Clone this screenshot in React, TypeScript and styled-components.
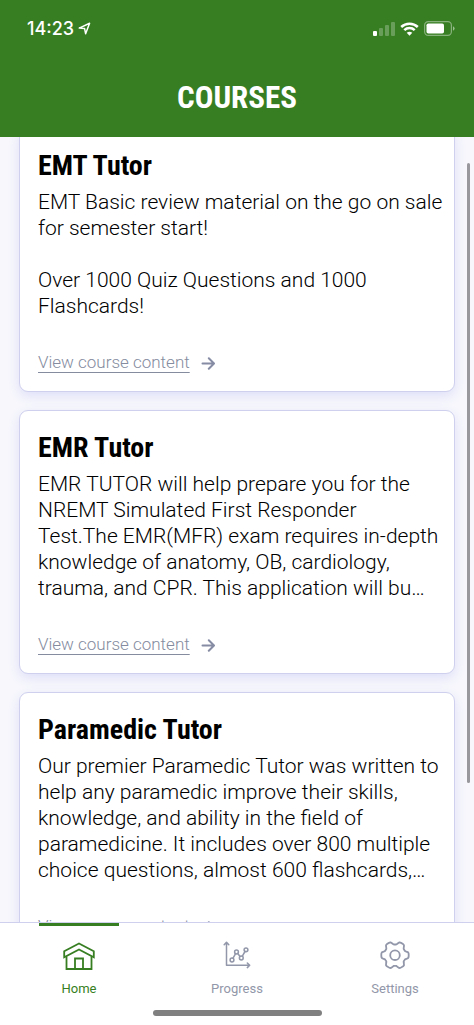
import React, { useLayoutEffect, useRef } from "react";
import styled, { createGlobalStyle } from "styled-components";

const GlobalStyle = createGlobalStyle`
  * { box-sizing: border-box; }
  body { margin: 0; background: #fff; font-family: Roboto, "Liberation Sans", sans-serif; font-weight: 300; }
`;

const Screen = styled.div`
  display: flex;
  flex-direction: column;
  height: 100vh;
  overflow: hidden;
`;

const Header = styled.header`
  flex: none;
  background: #377e22;
  color: #fff;
  padding-bottom: 20px;
`;

const StatusBar = styled.div`
  display: flex;
  align-items: center;
  justify-content: space-between;
  height: 57px;
  padding: 0 19px 0 27px;
`;

const Clock = styled.div`
  display: flex;
  align-items: center;
  gap: 4px;
  font: 500 18px/24px Inter, sans-serif;
`;

const StatusIcons = styled.div`
  display: flex;
  align-items: center;
  gap: 5px;
`;

const PageTitle = styled.h1`
  margin: 22px 0 0;
  text-align: center;
  font: 700 31px/38px "Roboto Condensed", "Liberation Sans Narrow", sans-serif;
`;

const Body = styled.div`
  position: relative;
  flex: 1;
  min-height: 0;
`;

const CourseList = styled.main`
  display: flex;
  flex-direction: column;
  gap: 18px;
  height: 100%;
  padding: 19px;
  overflow-y: auto;
  scrollbar-width: none;
  background: #f7f7fc;
`;

const ScrollThumb = styled.div`
  position: absolute;
  top: 26px;
  right: 4px;
  width: 3px;
  height: 79%;
  border-radius: 2px;
  background: #98989d;
`;

const Card = styled.article`
  flex: none;
  padding: 21px 0 17px 18px;
  border: 1px solid #cfd0ee;
  border-radius: 9px;
  background: #fff;
  box-shadow: 0 4px 12px #dedff8;
`;

const CardTitle = styled.h2`
  margin: 0 0 7px;
  color: #000;
  font: 700 28px/32px "Roboto Condensed", "Liberation Sans Narrow", sans-serif;
`;

const Description = styled.p`
  margin: 0 0 31px;
  color: #000;
  font-size: 21px;
  line-height: 26px;
  white-space: pre-line;
`;

const CourseLink = styled.a`
  display: flex;
  align-items: center;
  gap: 11px;
  color: #858ca0;
  font-size: 17px;
  line-height: 24px;
  text-decoration: none;

  span {
    text-decoration: underline;
    text-decoration-thickness: 1px;
    text-underline-offset: 4px;
    text-decoration-skip-ink: none;
  }
`;

const TabBar = styled.nav`
  flex: none;
  display: grid;
  grid-template-columns: repeat(3, 1fr);
  border-top: 1px solid #cfd0ee;
  background: #fff;
`;

const Tab = styled.button<{ $active?: boolean }>`
  display: flex;
  flex-direction: column;
  align-items: center;
  gap: 7px;
  padding: 0;
  border: 0;
  background: none;
  color: ${(p) => (p.$active ? "#377e22" : "#9297a9")};
  font: 400 13px/20px Roboto, "Liberation Sans", sans-serif;

  &::before {
    content: "";
    width: 80px;
    height: 3px;
    margin-bottom: 7px;
    background: ${(p) => (p.$active ? "#377e22" : "transparent")};
  }
`;

const HomeIndicator = styled.div`
  flex: none;
  width: 169px;
  height: 6px;
  margin: 11px auto 9px;
  border-radius: 3px;
  background: #808080;
`;

const LocationIcon = () => (
  <svg width="13" height="13" viewBox="0 0 13 13" fill="none" stroke="#fff" strokeWidth="1.5" strokeLinejoin="round" aria-hidden="true">
    <path d="M1.2 6.1 11.6 1.3 7.6 11.7 6.6 6.6Z" />
  </svg>
);

const SignalIcon = () => (
  <svg width="22" height="14" viewBox="0 0 22 14" fill="#fff" aria-hidden="true">
    <rect x="0" y="9" width="4" height="5" rx="1" />
    <g opacity=".25">
      <rect x="6" y="6" width="4" height="8" rx="1" />
      <rect x="12" y="3" width="4" height="11" rx="1" />
      <rect x="18" y="0" width="4" height="14" rx="1" />
    </g>
  </svg>
);

const WifiIcon = () => (
  <svg width="19" height="14" viewBox="0 0 19 14" fill="none" stroke="#fff" strokeWidth="2.5" aria-hidden="true">
    <path d="M1.2 5A12 12 0 0 1 17.8 5" />
    <path d="M4.3 8.2A7.4 7.4 0 0 1 14.7 8.2" />
    <path d="M9.5 13.7 6.7 10.8Q9.5 8.6 12.3 10.8Z" fill="#fff" stroke="none" />
  </svg>
);

const BatteryIcon = () => (
  <svg width="31" height="15" viewBox="0 0 31 15" aria-hidden="true">
    <rect x=".6" y=".6" width="26.8" height="13.8" rx="3.6" fill="none" stroke="#fff" strokeOpacity=".4" strokeWidth="1.2" />
    <rect x="2.5" y="2.5" width="17.5" height="10" rx="1.8" fill="#fff" />
    <path d="M29 5.3Q30.6 6 30.6 7.5T29 9.7Z" fill="#fff" opacity=".5" />
  </svg>
);

const ArrowIcon = () => (
  <svg width="15" height="16" viewBox="0 0 15 16" fill="none" stroke="#858ca4" strokeWidth="2" strokeLinecap="round" strokeLinejoin="round" aria-hidden="true">
    <path d="M1.5 9.5H12.5M7.8 4.3 13 9.5 7.8 14.7" />
  </svg>
);

const HomeIcon = () => (
  <svg width="32" height="32" viewBox="0 0 32 32" fill="none" stroke="currentColor" strokeWidth="1.8" strokeLinejoin="miter" aria-hidden="true">
    <path d="M1.2 11.2 16 3.4 30.8 11.2V17.3L16 9.5 1.2 17.3Z" />
    <path d="M3.5 16.5V29H28.5V16.5M12 29V18.5H20V29" />
  </svg>
);

const ProgressIcon = () => (
  <svg width="32" height="32" viewBox="0 0 32 32" fill="none" stroke="currentColor" strokeWidth="1.5" strokeLinecap="round" strokeLinejoin="round" aria-hidden="true">
    <path d="M5.5 2.5V25.3H28.5M3.2 4.8 5.5 2.3 7.8 4.8M26.3 23 28.7 25.3 26.3 27.6" />
    <circle cx="11" cy="20" r="1.9" />
    <circle cx="15.5" cy="12" r="1.9" />
    <circle cx="20.3" cy="18" r="1.9" />
    <circle cx="25" cy="9.8" r="1.9" />
    <path d="M11.9 18.3 14.6 13.7M16.7 13.5 19.1 16.5M21.2 16.3 24 11.5" />
  </svg>
);

// Outline of a six-toothed gear with flattened tips, sampled every four degrees.
const gearPoints = Array.from({ length: 90 }, (_, i) => {
  const angle = (i * 4 * Math.PI) / 180;
  const radius = 12.2 + 1.5 * Math.max(-1, Math.min(1, 1.7 * Math.cos(6 * angle) + 0.3));
  return `${(16 + radius * Math.cos(angle)).toFixed(2)},${(15.2 + radius * Math.sin(angle)).toFixed(2)}`;
}).join(" ");

const SettingsIcon = () => (
  <svg width="32" height="32" viewBox="0 0 32 32" fill="none" stroke="currentColor" strokeWidth="1.8" strokeLinejoin="round" aria-hidden="true">
    <polygon points={gearPoints} />
    <circle cx="16" cy="15.2" r="4.8" />
  </svg>
);

const courses = [
  {
    title: "EMT Tutor",
    text: "EMT Basic review material on the go on sale\nfor semester start!\n\nOver 1000 Quiz Questions and 1000\nFlashcards!",
  },
  {
    title: "EMR Tutor",
    text: "EMR TUTOR will help prepare you for the\nNREMT Simulated First Responder\nTest.The EMR(MFR) exam requires in-depth\nknowledge of anatomy, OB, cardiology,\ntrauma, and CPR. This application will bu…",
  },
  {
    title: "Paramedic Tutor",
    text: "Our premier Paramedic Tutor was written to\nhelp any paramedic improve their skills,\nknowledge, and ability in the field of\nparamedicine. It includes over 800 multiple\nchoice questions, almost 600 flashcards,…",
  },
];

export default function App() {
  const list = useRef<HTMLElement>(null);

  useLayoutEffect(() => {
    if (list.current) list.current.scrollTop = 28;
  }, []);

  return (
    <Screen>
      <GlobalStyle />
      <Header>
        <StatusBar>
          <Clock>
            14:23
            <LocationIcon />
          </Clock>
          <StatusIcons>
            <SignalIcon />
            <WifiIcon />
            <BatteryIcon />
          </StatusIcons>
        </StatusBar>
        <PageTitle>COURSES</PageTitle>
      </Header>
      <Body>
        <CourseList ref={list}>
          {courses.map((course) => (
            <Card key={course.title}>
              <CardTitle>{course.title}</CardTitle>
              <Description>{course.text}</Description>
              <CourseLink href="#">
                <span>View course content</span>
                <ArrowIcon />
              </CourseLink>
            </Card>
          ))}
        </CourseList>
        <ScrollThumb />
      </Body>
      <TabBar>
        <Tab $active>
          <HomeIcon />
          Home
        </Tab>
        <Tab>
          <ProgressIcon />
          Progress
        </Tab>
        <Tab>
          <SettingsIcon />
          Settings
        </Tab>
      </TabBar>
      <HomeIndicator />
    </Screen>
  );
}
